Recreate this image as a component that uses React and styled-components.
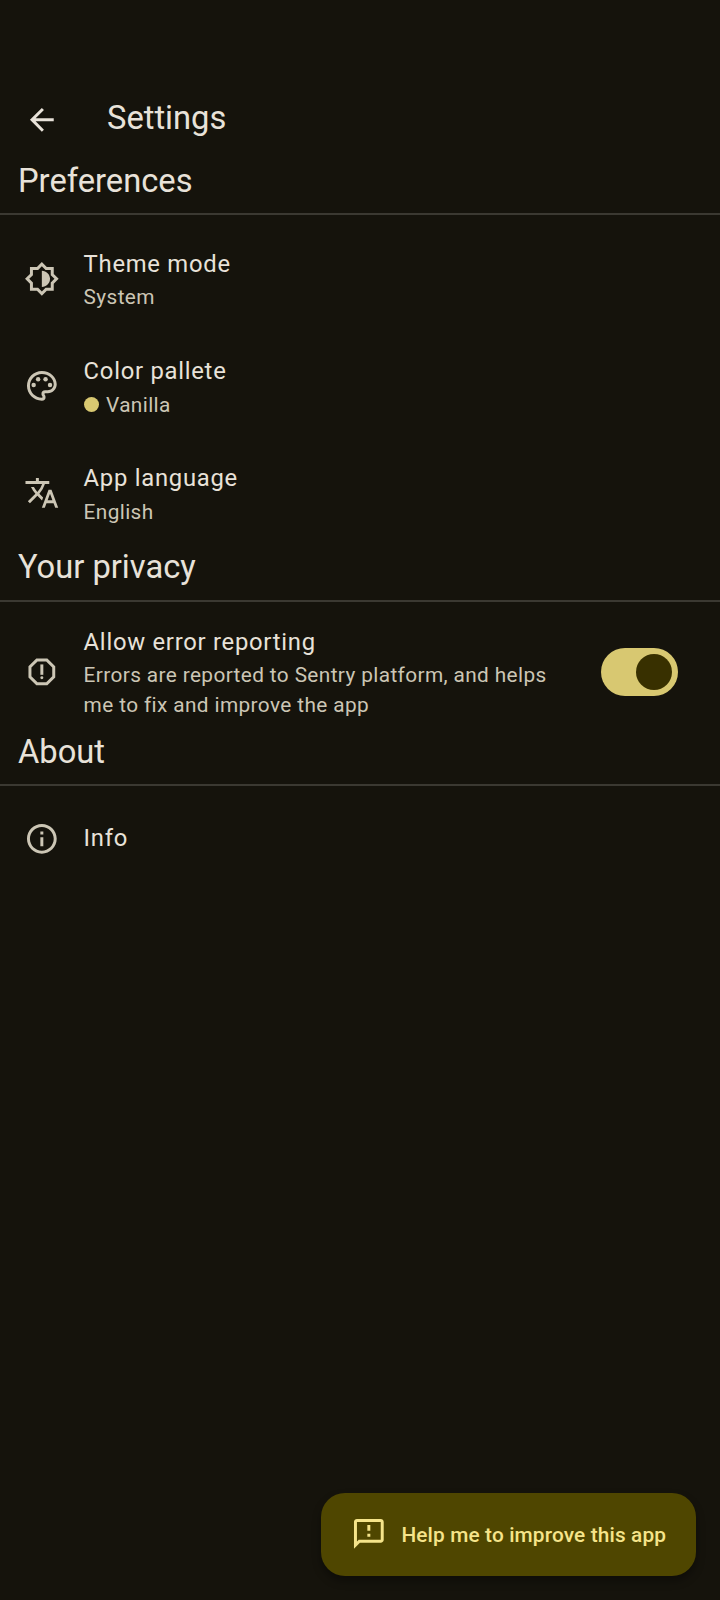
import React from "react";
import styled, { createGlobalStyle } from "styled-components";
import {
  MdArrowBack,
  MdOutlineBrightness6,
  MdOutlinePalette,
  MdTranslate,
  MdOutlineReport,
  MdOutlineInfo,
  MdOutlineFeedback,
} from "react-icons/md";

const GlobalStyle = createGlobalStyle`
  *, *::before, *::after { box-sizing: border-box; }
  body {
    margin: 0;
    background: #15130c;
    font-family: Roboto, "Liberation Sans", sans-serif;
  }
`;

const Screen = styled.div`
  display: flex;
  flex-direction: column;
  width: 720px;
  height: 1600px;
  padding-top: 78px;
  background: #15130c;
  color: #e8e2d9;
  overflow: hidden;
`;

const AppBar = styled.header`
  display: flex;
  align-items: center;
  height: 82px;
  padding-left: 24px;
`;

const BackButton = styled.button`
  display: flex;
  margin: 1px 47.3px 0 0;
  padding: 0;
  border: 0;
  background: none;
  color: inherit;
  font-size: 35.7px;
`;

const Title = styled.h1`
  margin: 0;
  padding-bottom: 3px;
  font-size: 32.7px;
  font-weight: 400;
  line-height: 42px;
`;

const Section = styled.section`
  display: flex;
  flex-direction: column;
`;

const SectionTitle = styled.h2`
  height: ${({ $height = 55 }) => $height}px;
  margin: 0 0 ${({ $gap }) => $gap}px;
  padding-left: 18px;
  border-bottom: 2px solid #3b3932;
  font-size: 32.7px;
  font-weight: 400;
  line-height: 42px;
`;

const Row = styled.div`
  display: flex;
  align-items: center;
  height: ${({ $height }) => $height}px;
  padding: 0 41.7px 0 23.8px;
`;

const RowIcon = styled.span`
  display: flex;
  flex: none;
  width: 59.8px;
  color: #ccc6b5;
  font-size: 35.7px;
`;

const RowText = styled.div`
  display: flex;
  flex: 1;
  flex-direction: column;
`;

const RowTitle = styled.span`
  padding-bottom: ${({ $single }) => ($single ? 2 : 0)}px;
  font-size: 23.8px;
  line-height: 36px;
  letter-spacing: 0.74px;
`;

const RowSubtitle = styled.span`
  display: flex;
  align-items: center;
  max-width: 475px;
  margin: ${({ $drop }) => `${$drop}px 0 ${-$drop}px`};
  color: #ccc6b5;
  font-size: 20.8px;
  line-height: 30px;
  letter-spacing: 0.385px;
`;

const Swatch = styled.span`
  width: 15px;
  height: 15px;
  margin-right: 7.4px;
  border-radius: 50%;
  background: #d8c871;
`;

const Switch = styled.button`
  display: flex;
  align-items: center;
  justify-content: flex-end;
  width: 77.3px;
  height: 48px;
  margin: 0;
  padding: 0 6px;
  border: 0;
  border-radius: 24px;
  background: #d8c871;
`;

const Thumb = styled.span`
  width: 36px;
  height: 36px;
  border-radius: 50%;
  background: #383000;
`;

const FeedbackButton = styled.button`
  display: flex;
  align-items: center;
  align-self: flex-end;
  width: 375px;
  height: 83px;
  margin: auto 24px 24px 0;
  padding: 0 0 0 29.7px;
  border: 0;
  border-radius: 24px;
  background: #4f4600;
  box-shadow: 0 5px 9px rgba(0, 0, 0, 0.35);
  color: #f5e48a;
  font-family: inherit;
  font-size: 20.8px;
  font-weight: 500;
  letter-spacing: 0.15px;
  white-space: nowrap;

  svg {
    flex: none;
    margin: 0 15px 2px 0;
    font-size: 35.7px;
  }
`;

function Setting({ icon: Icon, title, subtitle, swatch, trailing, height = 107, drop = 0 }) {
  return (
    <Row $height={height}>
      <RowIcon><Icon /></RowIcon>
      <RowText>
        <RowTitle $single={!subtitle}>{title}</RowTitle>
        {subtitle && (
          <RowSubtitle $drop={drop}>
            {swatch && <Swatch />}
            {subtitle}
          </RowSubtitle>
        )}
      </RowText>
      {trailing}
    </Row>
  );
}

export default function App() {
  return (
    <>
      <GlobalStyle />
      <Screen>
        <AppBar>
          <BackButton aria-label="Back"><MdArrowBack /></BackButton>
          <Title>Settings</Title>
        </AppBar>
        <Section>
          <SectionTitle $gap={10}>Preferences</SectionTitle>
          <Setting icon={MdOutlineBrightness6} title="Theme mode" subtitle="System" />
          <Setting icon={MdOutlinePalette} title="Color pallete" subtitle="Vanilla" swatch drop={1} />
          <Setting icon={MdTranslate} title="App language" subtitle="English" drop={1} />
        </Section>
        <Section>
          <SectionTitle $height={56} $gap={11}>Your privacy</SectionTitle>
          <Setting
            icon={MdOutlineReport}
            title="Allow error reporting"
            subtitle="Errors are reported to Sentry platform, and helps me to fix and improve the app"
            height={118}
            trailing={<Switch role="switch" aria-checked="true" aria-label="Allow error reporting"><Thumb /></Switch>}
          />
        </Section>
        <Section>
          <SectionTitle $gap={11}>About</SectionTitle>
          <Setting icon={MdOutlineInfo} title="Info" height={84} />
        </Section>
        <FeedbackButton>
          <MdOutlineFeedback />
          Help me to improve this app
        </FeedbackButton>
      </Screen>
    </>
  );
}
